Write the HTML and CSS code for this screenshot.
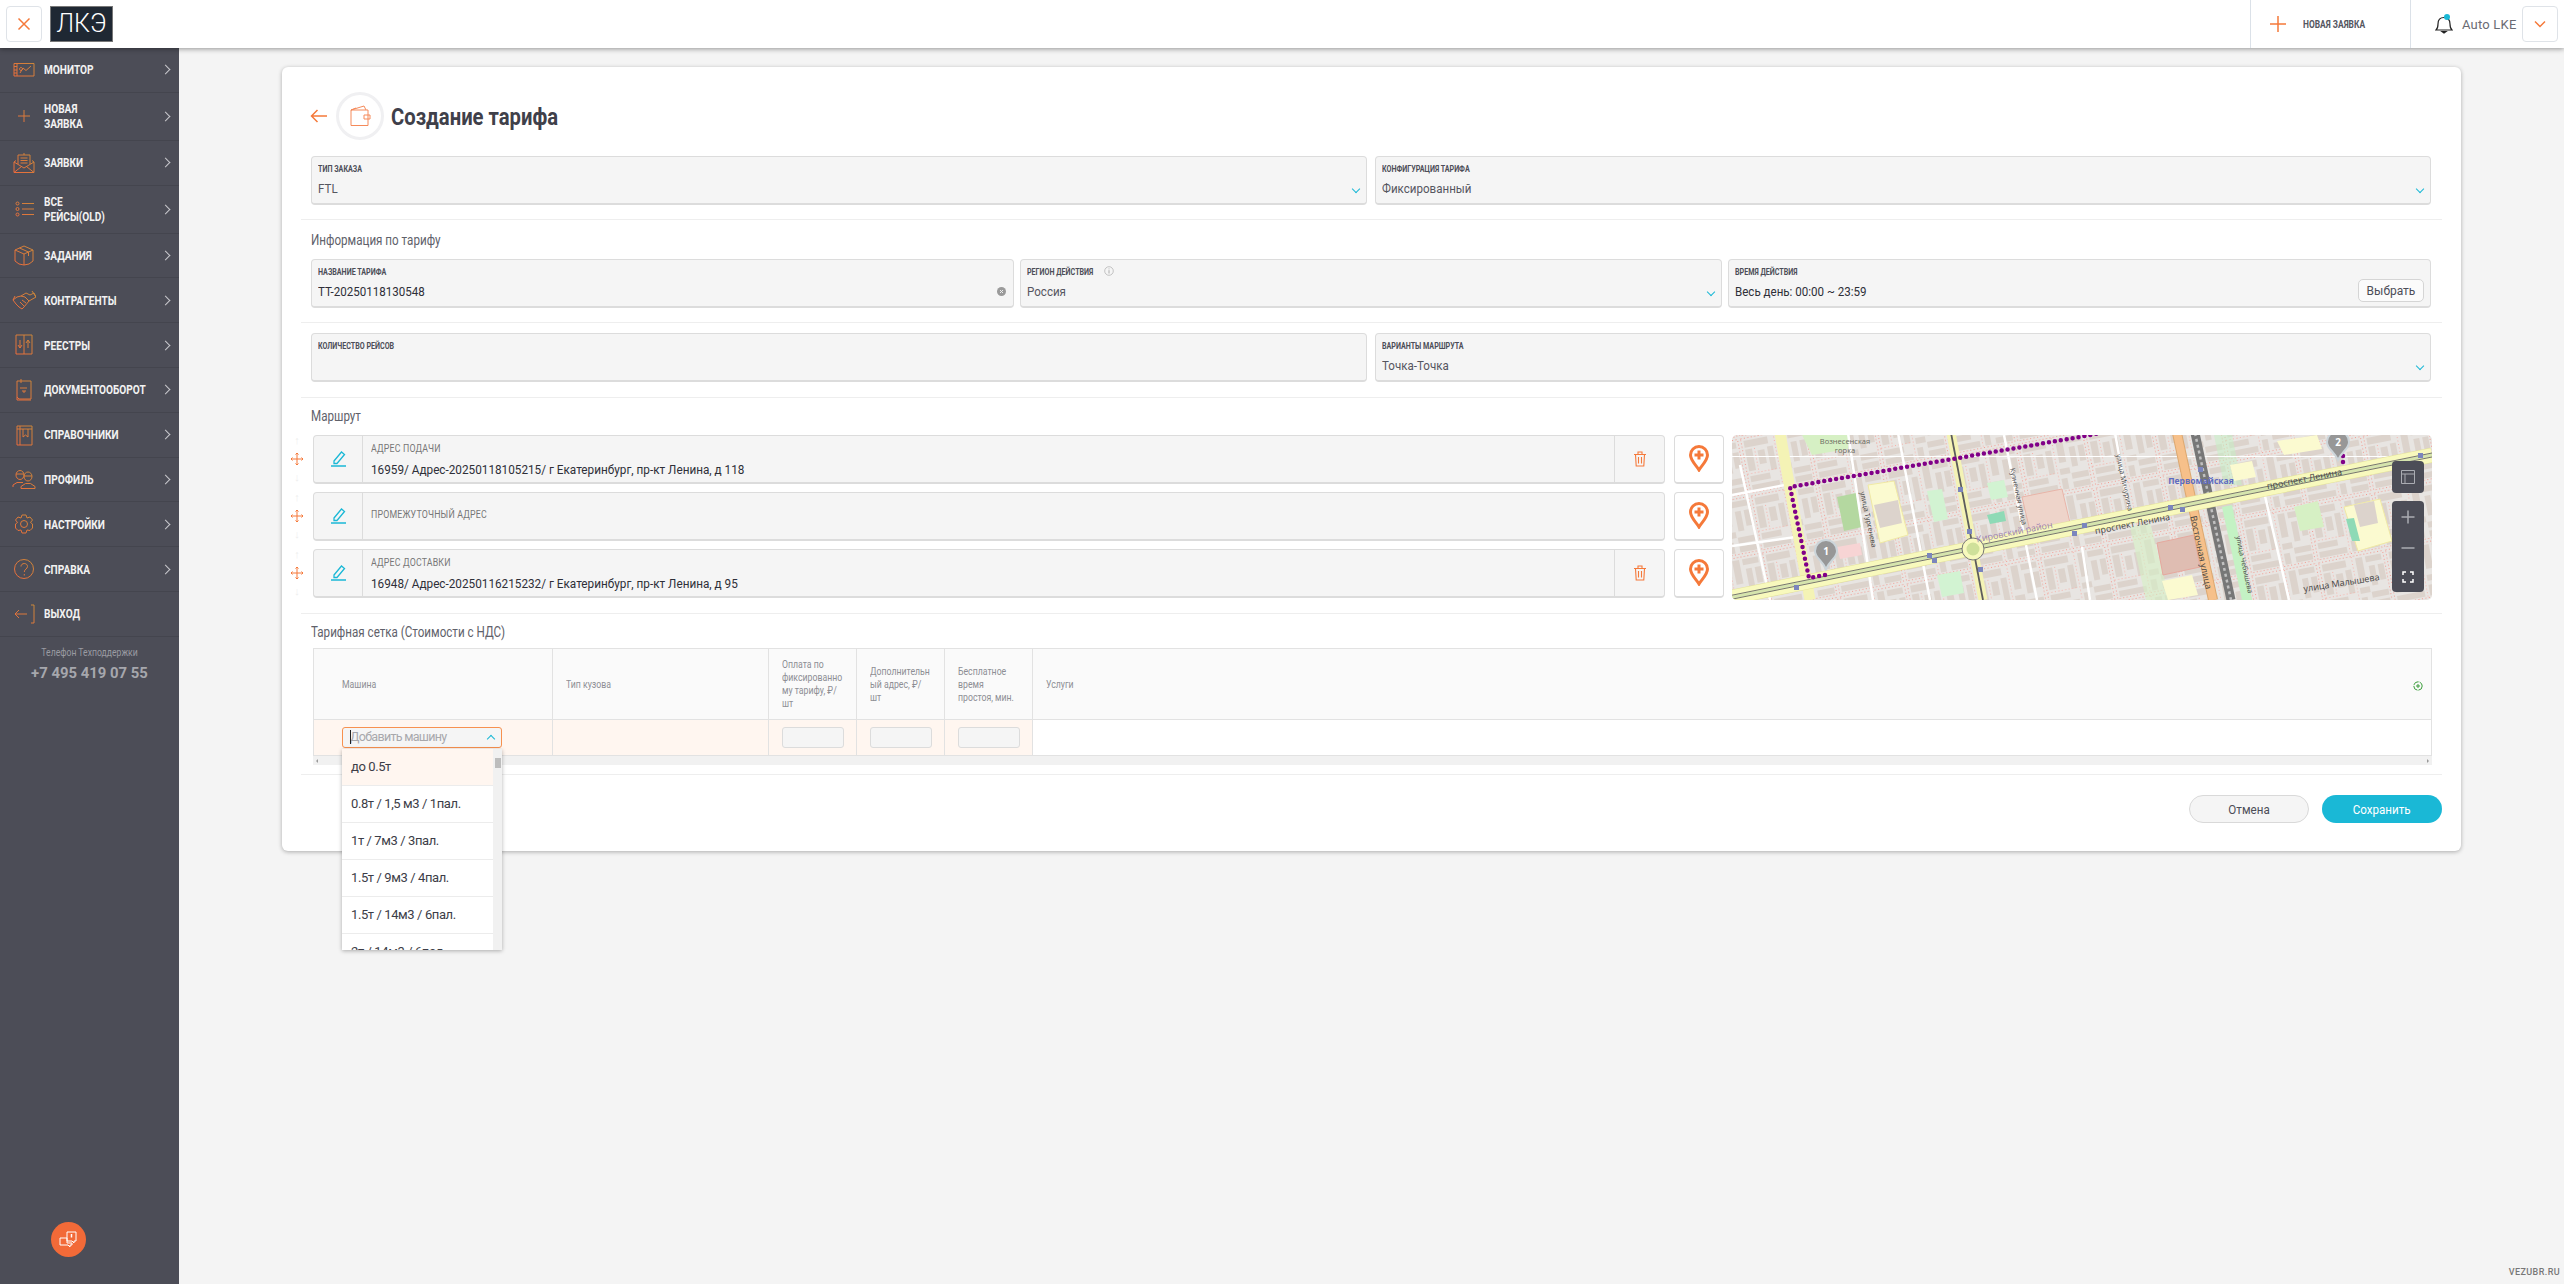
FILE: index.html
```html
<!DOCTYPE html>
<html lang="ru">
<head>
    <meta charset="UTF-8">
    <title>Создание тарифа</title>
    <link rel="stylesheet" href="styles.css">
</head>
<body>
    <svg class="defs">
        <defs>
            <linearGradient id="menuGrad" gradientUnits="userSpaceOnUse" x1="2" y1="22" x2="22" y2="2">
                <stop offset="0" stop-color="#ee6a3c"/>
                <stop offset="1" stop-color="#c9893a"/>
            </linearGradient>
            <pattern id="blocks" width="68" height="58" patternUnits="userSpaceOnUse" patternTransform="rotate(-11) translate(6 4)">
                <rect width="68" height="58" fill="#e8e5e2"/>
                <rect x="4" y="4" width="24" height="7" fill="#dcd3cc"/>
                <rect x="4" y="13" width="7" height="22" fill="#dcd3cc"/>
                <rect x="16" y="16" width="7" height="14" fill="#dcd3cc"/>
                <rect x="26" y="14" width="6" height="24" fill="#dcd3cc"/>
                <rect x="4" y="40" width="20" height="6" fill="#dcd3cc"/>
                <rect x="4" y="49" width="28" height="6" fill="#dcd3cc"/>
                <rect x="38" y="4" width="7" height="24" fill="#dcd3cc"/>
                <rect x="48" y="4" width="16" height="6" fill="#dcd3cc"/>
                <rect x="50" y="14" width="6" height="20" fill="#dcd3cc"/>
                <rect x="59" y="14" width="6" height="16" fill="#dcd3cc"/>
                <rect x="37" y="34" width="10" height="6" fill="#dcd3cc"/>
                <rect x="37" y="44" width="6" height="11" fill="#dcd3cc"/>
                <rect x="48" y="40" width="17" height="6" fill="#dcd3cc"/>
                <rect x="48" y="49" width="17" height="6" fill="#dcd3cc"/>
                <path d="M1.500 1.500H66.500V56.500H1.500Z" fill="none" stroke="#f29a90" stroke-width="1" stroke-dasharray="1 2.500"/>
                <path d="M34.500 2V56M2 37.500H33M13.500 13V38" fill="none" stroke="#f6b2aa" stroke-width="1" stroke-dasharray="1 2.500"/>
            </pattern>
        </defs>
    </svg>

    <header class="topbar">
        <button class="square-btn">
            <svg width="14" height="14" viewBox="0 0 14 14"><path d="M1.500 1.500L12.500 12.500M12.500 1.500L1.500 12.500" class="ico-orange"/></svg>
        </button>
        <div class="logo">ЛКЭ</div>
        <div class="topbar-new">
            <svg width="18" height="18" viewBox="0 0 18 18"><path d="M9 1V17M1 9H17" class="ico-orange"/></svg>
            <span>НОВАЯ ЗАЯВКА</span>
        </div>
        <div class="topbar-user">
            <svg class="bell" width="18" height="20" viewBox="0 0 18 20">
                <path d="M1 16h16c-1.800-1.500-2-3-2-6 0-4-2-6.500-6-6.500S3 6 3 10c0 3-.2 4.500-2 6ZM7 17.500h4L9 19Z" fill="none" stroke="#222" stroke-width="1.200"/>
                <circle cx="12" cy="3" r="3" fill="#1ab8d6"/>
            </svg>
            <span>Auto LKE</span>
            <button class="square-btn">
                <svg width="12" height="8" viewBox="0 0 12 8"><path d="M1 1.500L6 6.500L11 1.500" class="ico-orange"/></svg>
            </button>
        </div>
    </header>

    <div class="layout">
        <aside class="sidebar">
            <a class="menu-item">
                <svg class="menu-ico" viewBox="0 0 24 24"><path d="M2 5.500H22V18H2ZM5 5.500V18M2 8.500H5M2 12H5M2 15H5M8 15L11 10L14 12.500L19 8M9 9.500A1.500 1.500 0 1 0 9.100 9.500"/></svg>
                <span>МОНИТОР</span><i class="chev"></i>
            </a>
            <a class="menu-item double">
                <svg class="menu-ico" viewBox="0 0 24 24"><path d="M12 6V18M6 12H18"/></svg>
                <span>НОВАЯ<br>ЗАЯВКА</span><i class="chev"></i>
            </a>
            <a class="menu-item">
                <svg class="menu-ico" viewBox="0 0 24 24"><path d="M4 9.500L2 11V21.500H22V11L20 9.500M2 11L12 17L22 11M2 21.500L9.500 15.500M22 21.500L14.500 15.500M6 13V4H18V13M8.500 7H15.500M8.500 9.500H15.500M8.500 12H15.500M12 2V4"/></svg>
                <span>ЗАЯВКИ</span><i class="chev"></i>
            </a>
            <a class="menu-item double">
                <svg class="menu-ico" viewBox="0 0 24 24"><path d="M10 6.500H22M10 12H22M10 17.500H22"/><circle cx="5.500" cy="6.500" r="1.500"/><circle cx="5.500" cy="12" r="1.500"/><circle cx="5.500" cy="17.500" r="1.500"/></svg>
                <span>ВСЕ<br>РЕЙСЫ(OLD)</span><i class="chev"></i>
            </a>
            <a class="menu-item">
                <svg class="menu-ico" viewBox="0 0 24 24"><path d="M12 3L3 7V18L7 21L12 22L17 21L21 18V7ZM3 7L12 11L21 7M12 11V22M7.500 5L16.500 9V13"/></svg>
                <span>ЗАДАНИЯ</span><i class="chev"></i>
            </a>
            <a class="menu-item">
                <svg class="menu-ico" viewBox="0 0 24 24"><path d="M1 12L5 9L9 8L13 9L17 13L12 19L10 21L7 19L4 16ZM9 8L14 5L18 7L22 5L24 9L17 13M10 12L14 15M8 14L12 18M20 3L24 9M3 8L1 12"/></svg>
                <span>КОНТРАГЕНТЫ</span><i class="chev"></i>
            </a>
            <a class="menu-item">
                <svg class="menu-ico" viewBox="0 0 24 24"><path d="M4 2H20V21H4ZM12 2V21M8 7V15M6 12L8 15L10 12M16 15V7M14 10L16 7L18 10"/></svg>
                <span>РЕЕСТРЫ</span><i class="chev"></i>
            </a>
            <a class="menu-item">
                <svg class="menu-ico" viewBox="0 0 24 24"><path d="M5 3H19V21H7L5 19ZM5 19V22H19M9 1V5M8 10H15M10 13H14M12 13V15"/></svg>
                <span>ДОКУМЕНТООБОРОТ</span><i class="chev"></i>
            </a>
            <a class="menu-item">
                <svg class="menu-ico" viewBox="0 0 24 24"><path d="M5 3H20V22H5ZM5 6H20M8 3V22M11 6V14L13.500 12L16 14V6"/></svg>
                <span>СПРАВОЧНИКИ</span><i class="chev"></i>
            </a>
            <a class="menu-item">
                <svg class="menu-ico" viewBox="0 0 24 24"><path d="M4 8A4 4.500 0 1 1 12 8A4 4.500 0 1 1 4 8ZM1 20V18L5 15.500H11M12 9.500A4 4.500 0 1 1 20 9.500A4 4.500 0 1 1 12 9.500ZM9 21.500V19.500L13.500 16.500H18.500L23 19.500V21.500ZM4 7H12M12 9H20"/></svg>
                <span>ПРОФИЛЬ</span><i class="chev"></i>
            </a>
            <a class="menu-item">
                <svg class="menu-ico" viewBox="0 0 24 24"><circle cx="12" cy="12" r="3.500"/><path d="M10 3H14L15 6L18 5L20.500 8L18.500 10.500L20.500 12L20.500 16L18 18.500L15 18L14 21H10L9 18L6 18.500L3.500 16V12L5.500 10.500L3.500 8L6 5L9 6Z"/></svg>
                <span>НАСТРОЙКИ</span><i class="chev"></i>
            </a>
            <a class="menu-item">
                <svg class="menu-ico" viewBox="0 0 24 24"><circle cx="12" cy="12" r="9.500"/><path d="M9 9.500C9 5.500 15.500 5.500 15.500 9.500C15.500 12 12.300 12 12.300 15M12.300 17V18.500"/></svg>
                <span>СПРАВКА</span><i class="chev"></i>
            </a>
            <a class="menu-item">
                <svg class="menu-ico" viewBox="0 0 24 24"><path d="M3 12H15M7 8L3 12L7 16M19 3H22V21H19"/></svg>
                <span>ВЫХОД</span>
            </a>
            <div class="support">
                <div class="support-label">Телефон Техподдержки</div>
                <div class="support-phone">+7 495 419 07 55</div>
            </div>
            <div class="chat-btn">
                <svg width="20" height="18" viewBox="0 0 20 18"><path d="M1 7H8V12H13V14H11V16L9 14H1ZM8 1H17V10H15V12L13 10H8Z" fill="none" stroke="#fff" stroke-width="1"/><path d="M12.500 3V6.500" stroke="#fff" stroke-width="1.500"/></svg>
            </div>
        </aside>

        <main class="content">
            <section class="card">
                <div class="card-head">
                    <svg class="back" width="17" height="14" viewBox="0 0 17 14"><path d="M17 7H1.500M7.500 1L1.500 7L7.500 13" class="ico-orange"/></svg>
                    <div class="head-circle">
                        <svg width="22" height="22" viewBox="0 0 22 22"><path d="M2 5H19V20.500H2ZM2 5L15 1L17 5M2 5L7 3M15 10H21V14H15Z" fill="none" stroke="#f58a5a" stroke-width="1"/></svg>
                    </div>
                    <h1>Создание тарифа</h1>
                </div>

                <div class="row two">
                    <div class="field"><label>ТИП ЗАКАЗА</label><div class="value">FTL</div><i class="caret"></i></div>
                    <div class="field"><label>КОНФИГУРАЦИЯ ТАРИФА</label><div class="value">Фиксированный</div><i class="caret"></i></div>
                </div>
                <hr class="sep">
                <div class="group-title info-title">Информация по тарифу</div>
                <div class="row three">
                    <div class="field"><label>НАЗВАНИЕ ТАРИФА</label><div class="value dark">ТТ-20250118130548</div><svg class="clear" width="9" height="9" viewBox="0 0 9 9"><circle cx="4.500" cy="4.500" r="4.500" fill="#9a9a9a"/><path d="M3 3L6 6M6 3L3 6" stroke="#eee"/></svg></div>
                    <div class="field"><label>РЕГИОН ДЕЙСТВИЯ</label><svg class="info" width="10" height="10" viewBox="0 0 10 10"><circle cx="5" cy="5" r="4.300" fill="none" stroke="#b5b5b5" stroke-width=".8"/><path d="M5 4.200V7.500M5 2.500V3.300" stroke="#999" stroke-width=".8"/></svg><div class="value">Россия</div><i class="caret"></i></div>
                    <div class="field"><label>ВРЕМЯ ДЕЙСТВИЯ</label><div class="value dark">Весь день: 00:00 ~ 23:59</div><button class="pick">Выбрать</button></div>
                </div>
                <hr class="sep sep-b">
                <div class="row two">
                    <div class="field"><label>КОЛИЧЕСТВО РЕЙСОВ</label></div>
                    <div class="field"><label>ВАРИАНТЫ МАРШРУТА</label><div class="value">Точка-Точка</div><i class="caret"></i></div>
                </div>
                <hr class="sep sep-c">
                <div class="group-title route-title">Маршрут</div>

                <div class="route">
                    <div class="route-list">
                        <div class="stop">
                            <div class="drag"><span class="arr">↑</span><svg width="12" height="12" viewBox="0 0 12 12"><path d="M6 0V12M0 6H12M4.500 1.500L6 0L7.500 1.500M4.500 10.500L6 12L7.500 10.500M1.500 4.500L0 6L1.500 7.500M10.500 4.500L12 6L10.500 7.500" fill="none" stroke="#f5793a"/></svg><span class="arr">↓</span></div>
                            <div class="stop-box">
                                <div class="edit"><svg width="17" height="17" viewBox="0 0 17 17"><path d="M4 11L11.500 2L14.500 4.500L7 13.500H4ZM1 16H16" fill="none" stroke="#1ab8d6" stroke-width="1.300"/></svg></div>
                                <div class="stop-text"><label>АДРЕС ПОДАЧИ</label><div class="addr">16959/ Адрес-20250118105215/ г Екатеринбург, пр-кт Ленина, д 118</div></div>
                                <div class="trash"><svg width="14" height="16" viewBox="0 0 14 16"><path d="M1 3.500H13M5 3.500V1H9V3.500M2.500 3.500L3.200 15H10.800L11.500 3.500M5.500 6V12.500M8.500 6V12.500" fill="none" stroke="#f5793a" stroke-width="1.100"/></svg></div>
                            </div>
                            <div class="pin-box"><svg width="20" height="27" viewBox="0 0 20 27"><path d="M10 25C7 20 1.500 15.500 1.500 10A8.500 8.500 0 0 1 18.500 10C18.500 15.500 13 20 10 25Z" fill="none" stroke="#f5793a" stroke-width="3"/><path d="M10 5.500V14.500M5.500 10H14.500" stroke="#f5793a" stroke-width="3"/></svg></div>
                        </div>
                        <div class="stop">
                            <div class="drag"><span class="arr">↑</span><svg width="12" height="12" viewBox="0 0 12 12"><path d="M6 0V12M0 6H12M4.500 1.500L6 0L7.500 1.500M4.500 10.500L6 12L7.500 10.500M1.500 4.500L0 6L1.500 7.500M10.500 4.500L12 6L10.500 7.500" fill="none" stroke="#f5793a"/></svg><span class="arr">↓</span></div>
                            <div class="stop-box">
                                <div class="edit"><svg width="17" height="17" viewBox="0 0 17 17"><path d="M4 11L11.500 2L14.500 4.500L7 13.500H4ZM1 16H16" fill="none" stroke="#1ab8d6" stroke-width="1.300"/></svg></div>
                                <div class="stop-text only-label"><label>ПРОМЕЖУТОЧНЫЙ АДРЕС</label></div>
                            </div>
                            <div class="pin-box"><svg width="20" height="27" viewBox="0 0 20 27"><path d="M10 25C7 20 1.500 15.500 1.500 10A8.500 8.500 0 0 1 18.500 10C18.500 15.500 13 20 10 25Z" fill="none" stroke="#f5793a" stroke-width="3"/><path d="M10 5.500V14.500M5.500 10H14.500" stroke="#f5793a" stroke-width="3"/></svg></div>
                        </div>
                        <div class="stop">
                            <div class="drag"><span class="arr">↑</span><svg width="12" height="12" viewBox="0 0 12 12"><path d="M6 0V12M0 6H12M4.500 1.500L6 0L7.500 1.500M4.500 10.500L6 12L7.500 10.500M1.500 4.500L0 6L1.500 7.500M10.500 4.500L12 6L10.500 7.500" fill="none" stroke="#f5793a"/></svg><span class="arr">↓</span></div>
                            <div class="stop-box">
                                <div class="edit"><svg width="17" height="17" viewBox="0 0 17 17"><path d="M4 11L11.500 2L14.500 4.500L7 13.500H4ZM1 16H16" fill="none" stroke="#1ab8d6" stroke-width="1.300"/></svg></div>
                                <div class="stop-text"><label>АДРЕС ДОСТАВКИ</label><div class="addr">16948/ Адрес-20250116215232/ г Екатеринбург, пр-кт Ленина, д 95</div></div>
                                <div class="trash"><svg width="14" height="16" viewBox="0 0 14 16"><path d="M1 3.500H13M5 3.500V1H9V3.500M2.500 3.500L3.200 15H10.800L11.500 3.500M5.500 6V12.500M8.500 6V12.500" fill="none" stroke="#f5793a" stroke-width="1.100"/></svg></div>
                            </div>
                            <div class="pin-box"><svg width="20" height="27" viewBox="0 0 20 27"><path d="M10 25C7 20 1.500 15.500 1.500 10A8.500 8.500 0 0 1 18.500 10C18.500 15.500 13 20 10 25Z" fill="none" stroke="#f5793a" stroke-width="3"/><path d="M10 5.500V14.500M5.500 10H14.500" stroke="#f5793a" stroke-width="3"/></svg></div>
                        </div>
                    </div>

                    <div class="map">
                        <svg width="700" height="165" viewBox="0 0 700 165">
                            <rect width="700" height="165" fill="url(#blocks)"/>
                            <!-- green and school plots -->
                            <path d="M70 0H118L116 14L80 20Z" fill="#d6f0c4"/>
                            <path d="M105 62L124 58L130 92L112 96Z" fill="#b4d8a0"/>
                            <path d="M136 50L162 46L176 100L148 108Z" fill="#fbfad0" stroke="#f0e9a4"/>
                            <path d="M142 70L166 65L170 88L148 93Z" fill="#dcd3cc"/>
                            <path d="M195 56L210 54L216 84L202 87Z" fill="#d2f3d2"/>
                            <path d="M255 48L272 45L276 62L259 65Z" fill="#d2f3d2"/>
                            <path d="M255 80L272 76L274 86L258 89Z" fill="#8edab6"/>
                            <path d="M290 62L330 54L338 88L298 96Z" fill="#eed4ca" stroke="#e8b4a8"/>
                            <path d="M205 140L228 136L232 158L210 162Z" fill="#d2f3d2"/>
                            <path d="M105 112L128 108L130 120L108 124Z" fill="#f7d4d4"/>
                            <path d="M398 92L418 88L438 165H414Z" fill="#d6f0c4" opacity=".6"/>
                            <path d="M425 108L462 100L468 132L431 140Z" fill="#dfbdb2" stroke="#e6a89e"/>
                            <path d="M430 146L460 140L466 160L436 165Z" fill="#fbfad0"/>
                            <path d="M612 72L648 64L660 106L626 116Z" fill="#fbfad0" stroke="#f0e9a4"/>
                            <path d="M622 70L642 66L646 88L628 92Z" fill="#dcd3cc"/>
                            <path d="M614 84L622 83L628 106L620 106Z" fill="#8edab6"/>
                            <path d="M562 72L586 66L592 92L568 96Z" fill="#d6f0c4"/>
                            <path d="M490 72L500 70L520 165H510Z" fill="#c4f2c4"/>
                            <path d="M482 0H500L510 50H492Z" fill="#c4f2c4" opacity=".5"/>
                            <path d="M545 6L585 0L590 14L552 20Z" fill="#fbfad0"/>
                            <path d="M498 30L520 26L524 42L502 46Z" fill="#fbfad0"/>
                            <!-- white side streets -->
                            <g fill="none" stroke="#fff" stroke-width="2.500">
                                <path d="M0 60L53 50M0 111L71 101M8 30L38 165M116 -2L141 165M166 -2L198 165M272 0L305 165M383 -2L397 75M350 112L358 165M533 61L557 165"/>
                            </g>
                            <path d="M0 21.500H700" stroke="#fff" stroke-width="1"/>
                            <!-- vertical roads -->
                            <path d="M48 -2L78 165" stroke="#f4f3b5" stroke-width="11" fill="none"/>
                            <path d="M219 -2L251 165" stroke="#f4f3b5" stroke-width="9" fill="none"/>
                            <path d="M219 -2L251 165" stroke="#5c5c5c" stroke-width="1.800" fill="none"/>
                            <path d="M445 -2L481 165" stroke="#dca86f" stroke-width="10" fill="none"/>
                            <path d="M445 -2L481 165" stroke="#f6c08a" stroke-width="8" fill="none"/>
                            <path d="M463 -2L499 165" stroke="#777" stroke-width="9" fill="none"/>
                            <path d="M463 -2L499 165" stroke="#c0c0c0" stroke-width="2.500" stroke-dasharray="3 3" fill="none"/>
                            <!-- prospekt Lenina -->
                            <path d="M-4 163L700 20" stroke="#e4e19a" stroke-width="15" fill="none"/>
                            <path d="M-4 163L700 20" stroke="#f8f9bd" stroke-width="14" fill="none"/>
                            <path d="M-4 163L700 20" stroke="#d5e4ad" stroke-width="3" fill="none"/>
                            <path d="M-4 161L700 18M-4 165L700 22" stroke="#666" stroke-width=".9" fill="none"/>
                            <circle cx="241" cy="114" r="11" fill="#f8f9bd" stroke="#777"/>
                            <circle cx="241" cy="114" r="6.500" fill="#cfe09a"/>
                            <!-- stops -->
                            <g fill="#7b85bd">
                                <rect x="62" y="150" width="5" height="5"/><rect x="195" y="118" width="5" height="5"/><rect x="200" y="123" width="5" height="5"/>
                                <rect x="226" y="52" width="5" height="5"/><rect x="235" y="94" width="5" height="5"/><rect x="246" y="132" width="5" height="5"/>
                                <rect x="340" y="96" width="5" height="5"/><rect x="350" y="88" width="5" height="5"/><rect x="436" y="70" width="5" height="5"/>
                                <rect x="448" y="72" width="5" height="5"/><rect x="466" y="32" width="5" height="5"/><rect x="686" y="18" width="5" height="5"/>
                            </g>
                            <!-- route -->
                            <path d="M93 140L77 143L58 52L348 2L368 -2M611 21V28" fill="none" stroke="#800088" stroke-width="4.500" stroke-linecap="round" stroke-dasharray="0 6"/>
                            <g class="map-label">
                                <text x="113" y="9">Вознесенская</text>
                                <text x="113" y="18">горка</text>
                                <text class="metro" x="469" y="49">Первомайская</text>
                                <text class="street" transform="translate(573 47) rotate(-11)">проспект Ленина</text>
                                <text class="street" transform="translate(401 92) rotate(-11)">проспект Ленина</text>
                                <text class="district" transform="translate(283 100) rotate(-11)">Кировский район</text>
                                <text class="street" transform="translate(610 151) rotate(-9)">улица Малышева</text>
                                <text class="street" transform="translate(466 118) rotate(78)">Восточная улица</text>
                                <text class="street small" transform="translate(134 85) rotate(78)">улица Тургенева</text>
                                <text class="street small" transform="translate(284 62) rotate(78)">Кузнечная улица</text>
                                <text class="street small" transform="translate(390 48) rotate(78)">улица Мичурина</text>
                                <text class="street small" transform="translate(510 130) rotate(78)">улица Чебышева</text>
                            </g>
                            <!-- markers -->
                            <g>
                                <path d="M94 134C90 125 83 123 83 116A11 11 0 0 1 105 116C105 123 98 125 94 134Z" fill="#979797" stroke="#ccd5da" stroke-width="2"/>
                                <text class="pin-no" x="94" y="120">1</text>
                                <path d="M606 25C602 16 595 14 595 7A11 11 0 0 1 617 7C617 14 610 16 606 25Z" fill="#979797" stroke="#ccd5da" stroke-width="2"/>
                                <text class="pin-no" x="606" y="11">2</text>
                            </g>
                        </svg>
                        <div class="map-ctrl ctrl-layers">
                            <svg width="14" height="14" viewBox="0 0 14 14"><path d="M.5.5H13.500V13.500H.5ZM.5 4H13.500M4 4V13.500" fill="none" stroke="#aaacb2"/></svg>
                        </div>
                        <div class="map-ctrl ctrl-zoom">
                            <svg width="14" height="14" viewBox="0 0 14 14"><path d="M7 .5V13.500M.5 7H13.500" stroke="#aaacb2" stroke-width="1.500"/></svg>
                            <svg width="14" height="14" viewBox="0 0 14 14"><path d="M.5 7H13.500" stroke="#aaacb2" stroke-width="1.500"/></svg>
                            <svg width="12" height="12" viewBox="0 0 12 12"><path d="M1 4V1H4M8 1H11V4M11 8V11H8M4 11H1V8" fill="none" stroke="#fff" stroke-width="1.500"/></svg>
                        </div>
                    </div>
                </div>

                <hr class="sep sep-d">
                <div class="group-title grid-title">Тарифная сетка (Стоимости с НДС)</div>

                <div class="tariff">
                    <table>
                        <colgroup>
                            <col class="c-car"><col class="c-body"><col class="c-num"><col class="c-num"><col class="c-num"><col>
                        </colgroup>
                        <thead>
                            <tr>
                                <th class="car-cell"><span>Машина</span></th>
                                <th><span>Тип кузова</span></th>
                                <th><span>Оплата по<br>фиксированно<br>му тарифу, ₽/<br>шт</span></th>
                                <th><span>Дополнительн<br>ый адрес, ₽/<br>шт</span></th>
                                <th><span>Бесплатное<br>время<br>простоя, мин.</span></th>
                                <th class="services"><span>Услуги</span>
                                    <svg class="add-service" width="10" height="10" viewBox="0 0 10 10"><circle cx="5" cy="5" r="4.200" fill="none" stroke="#3a9d3a" stroke-dasharray="6 1"/><path d="M5 3V7M3 5H7" stroke="#3a9d3a"/></svg>
                                </th>
                            </tr>
                        </thead>
                        <tbody>
                            <tr>
                                <td class="car-cell">
                                    <div class="car-input"><span class="cursor"></span>Добавить машину<i class="caret up"></i></div>
                                    <div class="dropdown">
                                        <div class="drop-item active">до 0.5т</div>
                                        <div class="drop-item">0.8т / 1,5 м3 / 1пал.</div>
                                        <div class="drop-item">1т / 7м3 / 3пал.</div>
                                        <div class="drop-item">1.5т / 9м3 / 4пал.</div>
                                        <div class="drop-item">1.5т / 14м3 / 6пал.</div>
                                        <div class="drop-item">2т / 14м3 / 6пал.</div>
                                        <div class="drop-scroll"><span class="thumb"></span></div>
                                    </div>
                                </td>
                                <td></td>
                                <td><div class="num-input"></div></td>
                                <td><div class="num-input"></div></td>
                                <td><div class="num-input"></div></td>
                                <td class="blank"></td>
                            </tr>
                        </tbody>
                    </table>
                    <div class="hscroll"><i class="tri left"></i><i class="tri right"></i></div>
                </div>

                <hr class="sep sep-e">
                <div class="actions">
                    <button class="btn-cancel"><span>Отмена</span></button>
                    <button class="btn-save"><span>Сохранить</span></button>
                </div>
            </section>
            <div class="brand">VEZUBR.RU</div>
        </main>
    </div>
</body>
</html>
```

FILE: styles.css
```css
* {
    box-sizing: border-box;
}
html, body {
    margin: 0;
    height: 100%;
}
body {
    width: 2564px;
    height: 1284px;
    overflow: hidden;
    font-family: Roboto, "Liberation Sans", sans-serif;
    background: #f4f4f4;
    color: #3c3d47;
    display: flex;
    flex-direction: column;
}
.defs {
    width: 0;
    height: 0;
    display: block;
}
.ico-orange {
    fill: none;
    stroke: #f5793a;
    stroke-width: 1.5;
}

/* the screenshot uses a condensed face, so Roboto gets squeezed to its widths */
label, .value, .group-title, h1, .addr, .menu-item span, .topbar-new span, th span {
    transform-origin: left center;
}

/* top bar */
.topbar {
    height: 48px;
    flex: none;
    background: #fff;
    box-shadow: 0 1px 5px rgba(0, 0, 0, .4);
    display: flex;
    align-items: center;
    padding-left: 6px;
    position: relative;
    z-index: 2;
}
.square-btn {
    width: 36px;
    height: 36px;
    background: #fff;
    border: 1px solid #dfe3e8;
    border-radius: 4px;
    display: flex;
    align-items: center;
    justify-content: center;
    padding: 0;
}
.logo {
    width: 63px;
    height: 36px;
    margin-left: 8px;
    background: #1f2833;
    border: 1px solid #777;
    color: #fff;
    font-size: 25px;
    font-weight: 300;
    text-align: center;
    line-height: 34px;
}
.topbar-new {
    margin-left: auto;
    width: 161px;
    height: 48px;
    border-left: 1px solid #dbe1e8;
    border-right: 1px solid #dbe1e8;
    display: flex;
    align-items: center;
    padding-left: 18px;
    gap: 16px;
}
.topbar-new span {
    display: inline-block;
    font-size: 10.500px;
    font-weight: 700;
    color: #55565f;
    transform: scaleX(.8);
}
.topbar-user {
    width: 153px;
    display: flex;
    align-items: center;
    padding: 0 6px 0 24px;
    font-size: 13px;
    color: #6a6b73;
}
.topbar-user span {
    margin-left: 9px;
    letter-spacing: .2px;
    white-space: nowrap;
}
.topbar-user .square-btn {
    margin-left: auto;
    flex: none;
}
.bell {
    flex: none;
}

/* layout */
.layout {
    flex: 1;
    display: flex;
    min-height: 0;
}
.sidebar {
    width: 179px;
    flex: none;
    background: #4c4d57;
    position: relative;
}
.menu-item {
    height: 44.800px;
    display: flex;
    align-items: center;
    padding: 0 13px 0 12px;
    border-bottom: 1px solid #44454e;
    color: #f2f2f2;
}
.menu-item.double {
    height: 48px;
}
.menu-item span {
    flex: none;
    width: 118px;
    font-size: 12.500px;
    font-weight: 700;
    line-height: 15px;
    margin-left: 8px;
    white-space: nowrap;
    transform: scaleX(.81);
}
.menu-ico {
    width: 24px;
    height: 24px;
    flex: none;
    fill: none;
    stroke: url(#menuGrad);
    stroke-width: 1;
}
.chev {
    margin-left: auto;
    width: 7px;
    height: 7px;
    border-top: 1.300px solid #c9c9cd;
    border-right: 1.300px solid #c9c9cd;
    transform: rotate(45deg);
    flex: none;
}
.support {
    text-align: center;
    padding-top: 7px;
}
.support-label {
    font-size: 11.500px;
    color: #9a9ba2;
    line-height: 16px;
    transform: scaleX(.75);
}
.support-phone {
    font-size: 15.500px;
    font-weight: 700;
    color: #a6a7ad;
    margin-top: 4px;
    transform: scaleX(.96);
}
.chat-btn {
    position: absolute;
    left: 51px;
    top: 1174px;
    width: 35px;
    height: 35px;
    border-radius: 50%;
    background: #f26a38;
    display: flex;
    align-items: center;
    justify-content: center;
}

/* card */
.content {
    flex: 1;
    padding: 19px 103px 0;
    position: relative;
}
.card {
    width: 2179px;
    height: 784px;
    background: #fff;
    border-radius: 6px;
    box-shadow: 0 1px 4px rgba(0, 0, 0, .3);
    padding: 0 19px;
}
.card-head {
    height: 89px;
    display: flex;
    align-items: center;
    padding: 9px 0 0 9px;
}
.back {
    flex: none;
}
.head-circle {
    width: 48px;
    height: 48px;
    margin-left: 9px;
    border: 3px solid #f0f0f2;
    border-radius: 50%;
    display: flex;
    align-items: center;
    justify-content: center;
}
h1 {
    font-size: 23px;
    font-weight: 700;
    margin: 2px 0 0 7px;
    color: #3f404a;
    transform: scaleX(.88);
}

/* form rows */
.row {
    display: grid;
    gap: 6px;
    margin: 0 11px 0 10px;
}
.row.two {
    grid-template-columns: 1fr 1fr;
    gap: 8px;
}
.row.three {
    grid-template-columns: 1fr 1fr 1fr;
}
.field {
    height: 49px;
    background: #f5f5f5;
    border: 1px solid #dcdcdc;
    border-bottom-width: 2px;
    border-radius: 4px;
    padding: 6px;
    position: relative;
}
label {
    display: block;
    font-size: 9.500px;
    font-weight: 700;
    line-height: 11px;
    color: #4c4d57;
    white-space: nowrap;
    transform: scaleX(.75);
}
.value {
    font-size: 13px;
    line-height: 16px;
    margin-top: 7px;
    color: #55565f;
    transform: scaleX(.89);
}
.value.dark {
    color: #2e2f38;
}
.caret {
    position: absolute;
    right: 7px;
    top: 29px;
    width: 6px;
    height: 6px;
    border-right: 1px solid #1ab8d6;
    border-bottom: 1px solid #1ab8d6;
    transform: rotate(45deg);
}
.caret.up {
    top: 8px;
    transform: rotate(225deg);
}
.clear {
    position: absolute;
    right: 7px;
    top: 27px;
}
.info {
    position: absolute;
    left: 83px;
    top: 6px;
}
.pick {
    position: absolute;
    right: 6px;
    top: 19px;
    width: 66px;
    height: 23px;
    background: #fbfbfb;
    border: 1px solid #d5d5d5;
    border-radius: 5px;
    font: 12px Roboto, sans-serif;
    color: #4c4d57;
}
.sep {
    border: 0;
    border-top: 1px solid #eeeeee;
    height: 0;
    margin: 13.500px 0 0;
}
.sep-b {
    margin: 13.500px 0 10.500px;
}
.sep-c {
    margin-top: 14.500px;
}
.sep-d {
    margin-top: 13px;
}
.sep-e {
    margin-top: 8.500px;
}
.group-title {
    font-size: 14px;
    color: #60616a;
    margin-left: 10px;
    line-height: 16px;
    transform: scaleX(.83);
}
.info-title {
    padding: 12px 0 11px;
    height: 39.500px;
}
.route-title {
    padding: 10px 0 10px;
    height: 37.500px;
}
.grid-title {
    padding: 10px 0 8px;
    height: 34px;
}

/* route */
.route {
    display: flex;
    margin-left: -15px;
    gap: 8px;
}
.route-list {
    width: 1438px;
    flex: none;
    display: flex;
    flex-direction: column;
    gap: 8.500px;
}
.stop {
    display: flex;
    height: 48.500px;
}
.drag {
    width: 22px;
    margin-right: 5px;
    flex: none;
    display: flex;
    flex-direction: column;
    align-items: center;
    justify-content: space-between;
}
.arr {
    color: #eeeeee;
    font-size: 11px;
    line-height: 12px;
}
.stop-box {
    flex: 1;
    display: flex;
    background: #f5f5f5;
    border: 1px solid #dcdcdc;
    border-bottom-width: 2px;
    border-radius: 4px;
}
.edit {
    width: 49px;
    flex: none;
    border-right: 1px solid #dcdcdc;
    display: flex;
    align-items: center;
    justify-content: center;
}
.stop-text {
    flex: 1;
    padding: 7px 8px;
    font-size: 12.500px;
    color: #2e2f38;
    line-height: 16px;
}
.addr {
    transform: scaleX(.94);
}
.stop-text label {
    font-weight: 400;
    font-size: 10px;
    color: #777;
    margin-bottom: 8px;
    letter-spacing: .2px;
    transform: scaleX(.88);
}
.stop-text.only-label {
    padding-top: 16px;
}
.trash {
    width: 50px;
    flex: none;
    border-left: 1px solid #dcdcdc;
    display: flex;
    align-items: center;
    justify-content: center;
}
.pin-box {
    width: 50px;
    flex: none;
    margin-left: 9px;
    background: #fff;
    border: 1px solid #dcdcdc;
    border-bottom-width: 2px;
    border-radius: 4px;
    display: flex;
    align-items: center;
    justify-content: center;
}

/* map */
.map {
    width: 700px;
    height: 165px;
    flex: none;
    border-radius: 5px;
    overflow: hidden;
    position: relative;
}
.map svg text {
    font-family: "Open Sans", sans-serif;
    font-size: 7.500px;
    fill: #6a6a60;
    text-anchor: middle;
}
.map svg .street {
    font-size: 9px;
    fill: #444;
}
.map svg .street.small {
    font-size: 7px;
}
.map svg .metro {
    font-weight: 700;
    fill: #5e6bc0;
    font-size: 8.500px;
}
.map svg .district {
    fill: #9a7fae;
    font-size: 9px;
}
.map svg .pin-no {
    fill: #fff;
    font-weight: 700;
    font-size: 10px;
}
.map-ctrl {
    position: absolute;
    left: 660px;
    width: 32px;
    background: #4c4d57;
    border-radius: 4px;
    display: flex;
    flex-direction: column;
    align-items: center;
}
.ctrl-layers {
    top: 26px;
    height: 32px;
    justify-content: center;
}
.ctrl-zoom {
    top: 66px;
    height: 91px;
    justify-content: space-between;
    padding: 9px 0;
}

/* tariff table */
.tariff {
    margin: 0 10px 0 12px;
    height: 117px;
}
table {
    width: 100%;
    table-layout: fixed;
    border-collapse: collapse;
    border: 1px solid #e2e2e2;
}
.c-car {
    width: 239px;
}
.c-body {
    width: 216px;
}
.c-num {
    width: 88px;
}
th {
    height: 71px;
    background: #fafafa;
    border: 1px solid #e2e2e2;
    font-size: 10.500px;
    font-weight: 400;
    color: #8d8e94;
    line-height: 13px;
    text-align: left;
    padding: 0 0 0 13px;
    position: relative;
}
th span {
    display: inline-block;
    white-space: nowrap;
    transform: scaleX(.83);
}
.add-service {
    position: absolute;
    right: 8px;
    top: 32px;
}
td {
    height: 36px;
    background: #fff6f0;
    border: 1px solid #e2e2e2;
    padding: 0 0 0 13px;
    position: relative;
}
td.blank {
    background: #fff;
    border-bottom: 0;
}
th.car-cell, td.car-cell {
    padding-left: 28px;
}
.car-input {
    width: 160px;
    height: 21px;
    background: #f5f5f5;
    border: 1.500px solid #f7914f;
    border-radius: 3px;
    font-size: 12.500px;
    letter-spacing: -.7px;
    color: #a8a8ac;
    line-height: 18px;
    padding-left: 7px;
    position: relative;
}
.cursor {
    position: absolute;
    left: 7px;
    top: 2px;
    width: 1px;
    height: 14px;
    background: #222;
}
.num-input {
    width: 62px;
    height: 21px;
    background: #f5f5f5;
    border: 1px solid #dcdcdc;
    border-radius: 3px;
}
.dropdown {
    position: absolute;
    left: 28px;
    top: 29px;
    width: 160px;
    height: 201px;
    overflow: hidden;
    background: #fff;
    box-shadow: 0 1px 4px rgba(0, 0, 0, .3);
    z-index: 3;
    padding-right: 9px;
}
.drop-item {
    height: 37px;
    border-bottom: 1px solid #ececec;
    font-size: 13px;
    letter-spacing: -.4px;
    line-height: 36px;
    padding-left: 9px;
    color: #3c3d47;
}
.drop-item.active {
    background: #fff6f0;
}
.drop-scroll {
    position: absolute;
    right: 0;
    top: 0;
    width: 9px;
    height: 100%;
    background: #f1f1f1;
}
.thumb {
    position: absolute;
    left: 2px;
    top: 9px;
    width: 6px;
    height: 10px;
    background: #bdbdbd;
}
.hscroll {
    height: 9px;
    background: #f1f1f1;
    position: relative;
}
.tri {
    position: absolute;
    top: 2.500px;
    border-top: 2px solid transparent;
    border-bottom: 2px solid transparent;
}
.tri.left {
    left: 3px;
    border-right: 2px solid #999;
}
.tri.right {
    right: 3px;
    border-left: 2px solid #999;
}

/* actions */
.actions {
    display: flex;
    justify-content: flex-end;
    gap: 13px;
    padding-top: 20.500px;
}
.actions button {
    width: 120px;
    height: 28px;
    border-radius: 14px;
    font: 13.500px Roboto, sans-serif;
}
.actions span {
    display: inline-block;
    transform: scaleX(.86);
}
.btn-cancel {
    background: #f5f5f5;
    border: 1px solid #d9d9d9;
    color: #4c4d57;
}
.btn-save {
    background: #1ab8d6;
    border: 0;
    color: #fff;
}
.brand {
    position: absolute;
    right: 4px;
    bottom: 7px;
    font-size: 9px;
    font-weight: 500;
    color: #777;
    letter-spacing: .4px;
}
```
